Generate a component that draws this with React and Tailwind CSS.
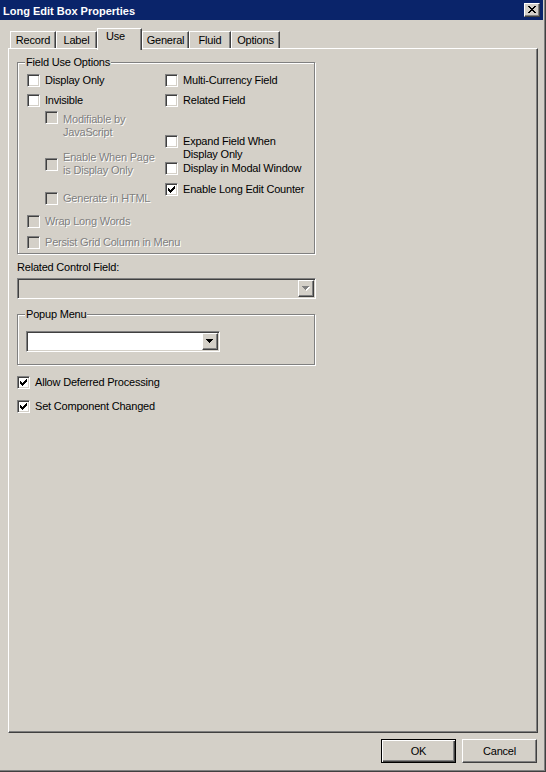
const raised =
  'border border-t-white border-l-white border-b-[#404040] border-r-[#404040] shadow-[inset_-1px_-1px_0_#808080] bg-[#d4d0c8]'
const sunken =
  'border border-t-[#808080] border-l-[#808080] border-b-white border-r-white shadow-[inset_1px_1px_0_#404040,inset_-1px_-1px_0_#d4d0c8]'
const disabledText = 'text-[#808080] [text-shadow:1px_1px_0_#fff]'

function CheckBox({ checked, disabled }) {
  return (
    <span
      className={`block w-[13px] h-[13px] shrink-0 ${sunken} ${disabled ? 'bg-[#d4d0c8]' : 'bg-white'}`}
    >
      {checked && (
        <svg width="11" height="11" viewBox="0 0 11 11" shapeRendering="crispEdges">
          <path
            fill={disabled ? '#808080' : '#000'}
            d="M2 4h1v3H2zM3 5h1v3H3zM4 6h1v3H4zM5 5h1v3H5zM6 4h1v3H6zM7 3h1v3H7zM8 2h1v3H8z"
          />
        </svg>
      )}
    </span>
  )
}

function Check({ label, checked, disabled, center, textClass = '', className = '' }) {
  return (
    <div className={`flex gap-[5px] ${center ? 'items-center' : 'items-start'} ${className}`}>
      <CheckBox checked={checked} disabled={disabled} />
      <span className={`whitespace-nowrap leading-[13px] ${disabled ? disabledText : ''} ${textClass}`}>
        {label}
      </span>
    </div>
  )
}

function Arrow({ disabled }) {
  const d = 'M0 0h7v1H0zM1 1h5v1H1zM2 2h3v1H2zM3 3h1v1H3z'
  return (
    <svg width="8" height="5" viewBox="0 0 8 5" shapeRendering="crispEdges">
      {disabled && <path fill="#fff" d={d} transform="translate(1 1)" />}
      <path fill={disabled ? '#808080' : '#000'} d={d} />
    </svg>
  )
}

function Select({ disabled, className = '' }) {
  return (
    <div
      className={`h-[21px] p-[1px] flex justify-end ${sunken} ${disabled ? 'bg-[#d4d0c8]' : 'bg-white'} ${className}`}
    >
      <div className={`w-[16px] h-full flex items-center justify-center ${raised}`}>
        <Arrow disabled={disabled} />
      </div>
    </div>
  )
}

function GroupBox({ title, className = '', children }) {
  return (
    <div className={`border border-[#808080] shadow-[inset_1px_1px_0_#fff,1px_1px_0_#fff] ${className}`}>
      <div className="-mt-[7px] ml-[7px] px-[1px] w-fit bg-[#d4d0c8] leading-[13px]">{title}</div>
      {children}
    </div>
  )
}

function Tab({ label, width, active }) {
  if (active) {
    return (
      <div
        className={`${width} h-[22px] -mb-[2px] relative z-10 bg-[#d4d0c8] border-t border-l border-r border-t-white border-l-white border-r-[#404040] shadow-[inset_-1px_0_0_#808080] pt-[1px] pl-[8px]`}
      >
        {label}
      </div>
    )
  }
  return (
    <div
      className={`${width} h-[17px] bg-[#d4d0c8] border-t border-l border-r border-t-white border-l-white border-r-[#404040] shadow-[inset_-1px_0_0_#808080] pt-[2px] text-center`}
    >
      {label}
    </div>
  )
}

function Button({ label, isDefault }) {
  if (isDefault) {
    return (
      <div className="w-[75px] h-[24px] border border-black bg-[#d4d0c8] shadow-[inset_1px_1px_0_#fff,inset_-1px_-1px_0_#404040,inset_-2px_-2px_0_#808080] flex items-center justify-center">
        {label}
      </div>
    )
  }
  return <div className={`w-[75px] h-[24px] flex items-center justify-center ${raised}`}>{label}</div>
}

export default function App() {
  return (
    <div className="w-[546px] h-[772px] bg-[#d4d0c8] pr-[3px] text-black text-[11px] leading-[13px] tracking-[-0.2px] font-['Liberation_Sans',Arial,sans-serif] shadow-[inset_-1px_-1px_0_#404040,inset_-2px_-2px_0_#808080] overflow-hidden">
      {/* Title bar */}
      <div className="h-[20px] bg-[#0a246a] flex items-center justify-between pl-[3px] pr-[3px]">
        <span className="text-white font-bold tracking-normal pt-[2px]">Long Edit Box Properties</span>
        <div className={`w-[16px] h-[14px] ${raised}`}>
          <svg width="14" height="12" viewBox="0 0 14 12" shapeRendering="crispEdges">
            <path
              fill="#000"
              d="M3 2h2v1H3zM9 2h2v1H9zM4 3h2v1H4zM8 3h2v1H8zM5 4h4v1H5zM6 5h2v1H6zM5 6h4v1H5zM4 7h2v1H4zM8 7h2v1H8zM3 8h2v1H3zM9 8h2v1H9z"
            />
          </svg>
        </div>
      </div>

      {/* Tabs */}
      <div className="mt-[8px] h-[20px] pl-[10px] flex items-end">
        <Tab label="Record" width="w-[46px]" />
        <Tab label="Label" width="w-[41px]" />
        <Tab label="Use" width="w-[45px]" active />
        <Tab label="General" width="w-[47px]" />
        <Tab label="Fluid" width="w-[42px]" />
        <Tab label="Options" width="w-[49px]" />
      </div>

      {/* Tab page */}
      <div className="ml-[8px] w-[530px] h-[685px] border border-t-white border-l-white border-b-[#404040] border-r-[#404040] shadow-[inset_-1px_-1px_0_#808080] pl-[8px]">
        <GroupBox title="Field Use Options" className="mt-[13px] w-[298px] h-[192px]">
          <div className="flex items-start pl-[9px]">
            <div className="w-[138px] flex flex-col">
              <Check label="Display Only" className="mt-[5px]" />
              <Check label="Invisible" className="mt-[7px]" />
              <Check
                label={<>Modifiable by<br />JavaScript</>}
                disabled
                textClass="pt-[2px]"
                className="mt-[4px] pl-[18px]"
              />
              <Check
                label={<>Enable When Page<br />is Display Only</>}
                disabled
                center
                className="mt-[12px] pl-[18px]"
              />
              <Check label="Generate in HTML" disabled className="mt-[15px] pl-[18px]" />
            </div>
            <div className="flex flex-col">
              <Check label="Multi-Currency Field" className="mt-[5px]" />
              <Check label="Related Field" className="mt-[7px]" />
              <Check label={<>Expand Field When<br />Display Only</>} className="mt-[28px]" />
              <Check label="Display in Modal Window" className="mt-[1px]" />
              <Check label="Enable Long Edit Counter" checked className="mt-[8px]" />
            </div>
          </div>
          <div className="pl-[9px]">
            <Check label="Wrap Long Words" disabled className="mt-[10px]" />
            <Check label="Persist Grid Column in Menu" disabled className="mt-[8px]" />
          </div>
        </GroupBox>

        <div className="mt-[7px]">Related Control Field:</div>
        <Select disabled className="mt-[4px] w-[299px]" />

        <GroupBox title="Popup Menu" className="mt-[15px] w-[298px] h-[51px]">
          <Select className="mt-[10px] ml-[8px] w-[194px]" />
        </GroupBox>

        <Check label="Allow Deferred Processing" checked className="mt-[11px]" />
        <Check label="Set Component Changed" checked className="mt-[11px]" />
      </div>

      {/* Dialog buttons */}
      <div className="mt-[6px] flex justify-end gap-[6px] pr-[6px]">
        <Button label="OK" isDefault />
        <Button label="Cancel" />
      </div>
    </div>
  )
}
